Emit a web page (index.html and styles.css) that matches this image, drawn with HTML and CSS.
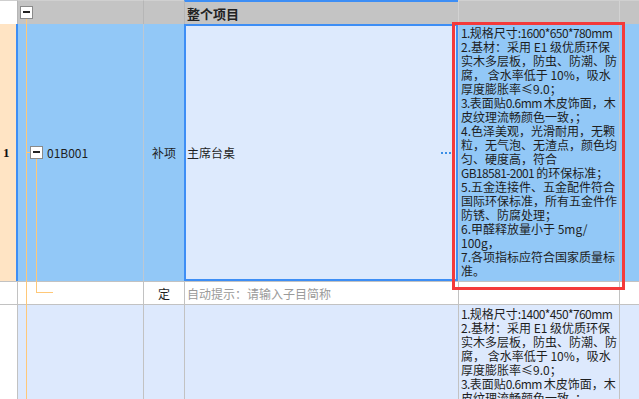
FILE: index.html
```html
<!DOCTYPE html>
<html lang="zh-CN">
<head>
    <meta charset="UTF-8">
    <title>整个项目</title>
    <link rel="stylesheet" href="styles.css">
</head>
<body>
    <div class="sheet">
        <div class="row row-head">
            <div class="cell num"></div>
            <div class="cell code"><span class="toggle"></span></div>
            <div class="cell type"></div>
            <div class="cell title">整个项目</div>
            <div class="cell spec"></div>
            <div class="cell tail"></div>
        </div>

        <div class="row row-sel">
            <div class="cell num">1</div>
            <div class="cell code"><span class="toggle"></span><span>01B001</span></div>
            <div class="cell type">补项</div>
            <div class="cell name">
                <span>主席台桌</span>
                <span class="more"><i></i><i></i><i></i></span>
            </div>
            <div class="cell spec">
                <div class="spec-text"><span class="lat">1.</span>规格尺寸<span class="lat">:1600*650*780mm</span><br>2.基材：采用 E1 级优质环保<br>实木多层板，防虫、防潮、防<br>腐， 含水率低于 10%，吸水<br>厚度膨胀率≤9.0；<br><span class="lat">3.</span>表面贴<span class="lat">0.6mm </span>木皮饰面，木<br>皮纹理流畅颜色一致，；<br>4.色泽美观，光滑耐用，无颗<br>粒，无气泡、无渣点，颜色均<br>匀、硬度高，符合<br><span class="lat">GB18581-2001 </span>的环保标准；<br>5.五金连接件、五金配件符合<br>国际环保标准，所有五金件作<br>防锈、防腐处理；<br>6.甲醛释放量小于 5mg/<br>100g，<br>7.各项指标应符合国家质量标<br>准。</div>
            </div>
            <div class="cell tail"></div>
        </div>

        <div class="row row-new">
            <div class="cell num"></div>
            <div class="cell code"></div>
            <div class="cell type">定</div>
            <div class="cell hint">自动提示：请输入子目简称</div>
            <div class="cell spec"></div>
            <div class="cell tail"></div>
        </div>

        <div class="row row-next">
            <div class="cell num"></div>
            <div class="cell code"></div>
            <div class="cell type"></div>
            <div class="cell name"></div>
            <div class="cell spec">
                <div class="spec-text"><span class="lat">1.</span>规格尺寸<span class="lat">:1400*450*760mm</span><br>2.基材：采用 E1 级优质环保<br>实木多层板，防虫、防潮、防<br>腐， 含水率低于 10%，吸水<br>厚度膨胀率≤9.0；<br><span class="lat">3.</span>表面贴<span class="lat">0.6mm </span>木皮饰面，木<br>皮纹理流畅颜色一致，；<br>4.色泽美观，光滑耐用，无颗<br>粒，无气泡、无渣点，颜色均<br>匀、硬度高，符合</div>
            </div>
            <div class="cell tail"></div>
        </div>

        <!-- 树形连接线 -->
        <div class="tree tree-main"></div>
        <div class="tree tree-stub"></div>
        <div class="tree tree-child"></div>
        <div class="tree tree-leaf"></div>

        <!-- 红色标注框 -->
        <div class="mark"></div>
    </div>
</body>
</html>
```

FILE: styles.css
```css
body {
    margin: 0;
    background: #fff;
    font-family: "Noto Sans CJK SC", "Noto Sans", sans-serif;
    font-size: 12px;
    color: #1e1e1e;
    overflow: hidden;
}
.sheet {
    position: relative;
    display: grid;
    grid-template-columns: 17px 126px 41px 274px 161px 1fr;
    grid-template-rows: 24px 257px 23px 1fr;
    width: 639px;
    height: 399px;
    overflow: hidden;
}
.row {
    display: contents;
}
.cell {
    box-sizing: border-box;
    display: flex;
    align-items: center;
    border-left: 1px solid #c2c2c2;
    overflow: hidden;
    white-space: nowrap;
}
.cell.num {
    border-left: none;
}
.cell.type {
    justify-content: center;
}

/* 表头 */
.row-head .cell {
    background: #c4c4c4;
    border-left-color: #b6b6b6;
    border-top: 1px solid #d0d0d0;
}
.row-head .num {
    background: #fff;
    border-top-color: #cfcfcf;
}
.row-head .code {
    padding-left: 2px;
}
.row-head .title {
    border-top: 2px solid #3d8ef5;
    padding-left: 2px;
    font-size: 13px;
    font-weight: bold;
    color: #222;
}
.row-head .spec,
.row-head .tail {
    border-left-color: #d2d2d2;
}

/* 选中行 */
.row-sel .cell {
    background: #92c8f7;
    border-left-color: #bcc8d4;
}
.row-sel .num {
    background: #ffe4c4;
    box-shadow: inset -1px 0 #3d8ef5;
    padding-left: 3px;
    font-family: "Liberation Serif", serif;
    font-weight: bold;
    font-size: 13px;
    color: #111;
}
.row-sel .code {
    border-left-color: #3d8ef5;
    padding-left: 12px;
    gap: 4px;
}
.row-sel .name {
    background: #ddeafd;
    border: 2px solid #3d8ef5;
    justify-content: space-between;
    padding: 0 5px 0 1px;
}
.more {
    display: flex;
    gap: 2px;
}
.more i {
    width: 2px;
    height: 2px;
    background: #3a8ee6;
}
.spec {
    align-items: flex-start;
    padding: 2px 0 0 2px;
}
.spec-text {
    line-height: 14px;
}
.spec-text .lat {
    letter-spacing: -0.6px; /* 半角字符收窄，贴近原表格的换行宽度 */
}

/* 新增行 */
.row-new .cell {
    border-top: 1px solid #c2c2c2;
}
.row-new .hint {
    padding-left: 2px;
    color: #9a9a9a;
}

/* 下一行 */
.row-next .cell {
    background: #dde9fd;
    border-top: 1px solid #c2c2c2;
}
.row-next .num {
    background: #fff;
}

.toggle {
    position: relative;
    flex: none;
    box-sizing: border-box;
    width: 13px;
    height: 13px;
    border: 1px solid #8a8a8a;
    background: #fff;
}
.toggle::after {
    content: "";
    position: absolute;
    left: 2px;
    right: 2px;
    top: 4px;
    height: 2px;
    background: #222;
}

.tree {
    position: absolute;
    background: #ffc878;
}
.tree-main {
    left: 26px;
    top: 19px;
    bottom: 0;
    width: 1px;
}
.tree-stub {
    left: 26px;
    top: 152px;
    width: 4px;
    height: 1px;
}
.tree-child {
    left: 36px;
    top: 159px;
    width: 1px;
    height: 134px;
}
.tree-leaf {
    left: 36px;
    top: 292px;
    width: 17px;
    height: 1px;
}

.mark {
    position: absolute;
    left: 452px;
    top: 22px;
    width: 173px;
    height: 268px;
    box-sizing: border-box;
    border: 3px solid #f43a3a;
}
```
